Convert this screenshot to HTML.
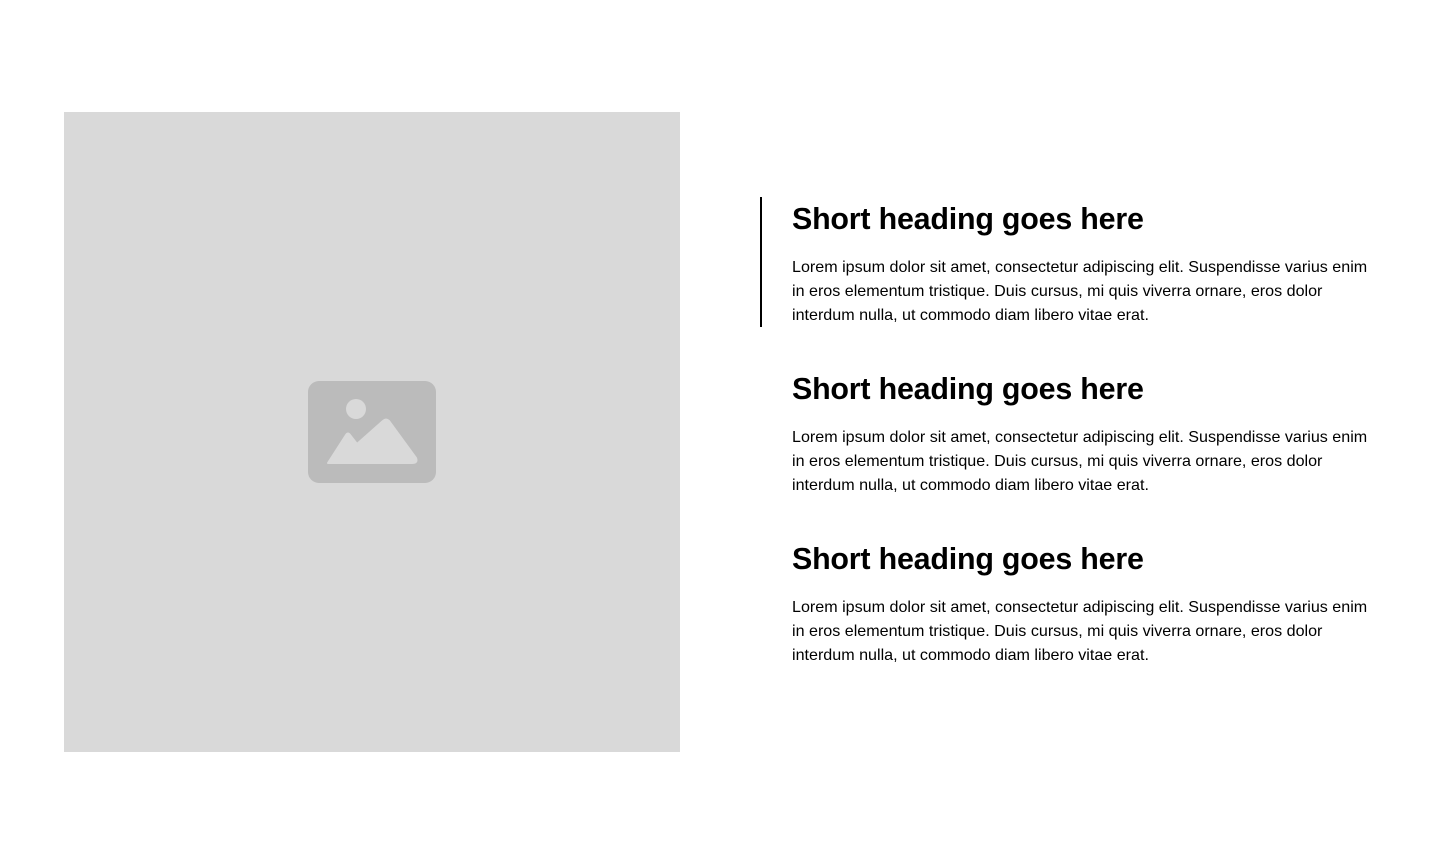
<!DOCTYPE html>
<html><head><style>
body{margin:0;width:1440px;height:864px;background:#fff;font-family:"Liberation Sans",sans-serif;color:#000;position:relative;overflow:hidden}
.img{position:absolute;left:64px;top:112px;width:616px;height:640px;background:#d9d9d9}
.bar{position:absolute;left:760px;top:197px;width:2px;height:130px;background:#000}
.blk{position:absolute;left:792px;white-space:nowrap}
h2{margin:0;font-size:30.4px;line-height:40px;font-weight:bold;letter-spacing:-0.2px}
p{margin:16px 0 0;font-size:16.1px;line-height:24px}
</style></head><body>
<div class="img"><svg style="position:absolute;left:244px;top:269px" width="128" height="102" viewBox="0 0 128 102">
<rect width="128" height="102" rx="11" fill="#bbbbbb"/>
<circle cx="48" cy="28" r="10" fill="#d9d9d9"/>
<path d="M20 82 L38 54 Q40 51 42 54 L49 63 L75 40 Q78 37 81 40 L108 77 Q110 82 104 82 Z" fill="#d9d9d9" stroke="#d9d9d9" stroke-width="2" stroke-linejoin="round"/>
</svg></div>
<div class="bar"></div>
<div class="blk" style="top:199px"><h2>Short heading goes here</h2><p>Lorem ipsum dolor sit amet, consectetur adipiscing elit. Suspendisse varius enim<br>in eros elementum tristique. Duis cursus, mi quis viverra ornare, eros dolor<br>interdum nulla, ut commodo diam libero vitae erat.</p></div>
<div class="blk" style="top:369px"><h2>Short heading goes here</h2><p>Lorem ipsum dolor sit amet, consectetur adipiscing elit. Suspendisse varius enim<br>in eros elementum tristique. Duis cursus, mi quis viverra ornare, eros dolor<br>interdum nulla, ut commodo diam libero vitae erat.</p></div>
<div class="blk" style="top:539px"><h2>Short heading goes here</h2><p>Lorem ipsum dolor sit amet, consectetur adipiscing elit. Suspendisse varius enim<br>in eros elementum tristique. Duis cursus, mi quis viverra ornare, eros dolor<br>interdum nulla, ut commodo diam libero vitae erat.</p></div>
</body></html>
